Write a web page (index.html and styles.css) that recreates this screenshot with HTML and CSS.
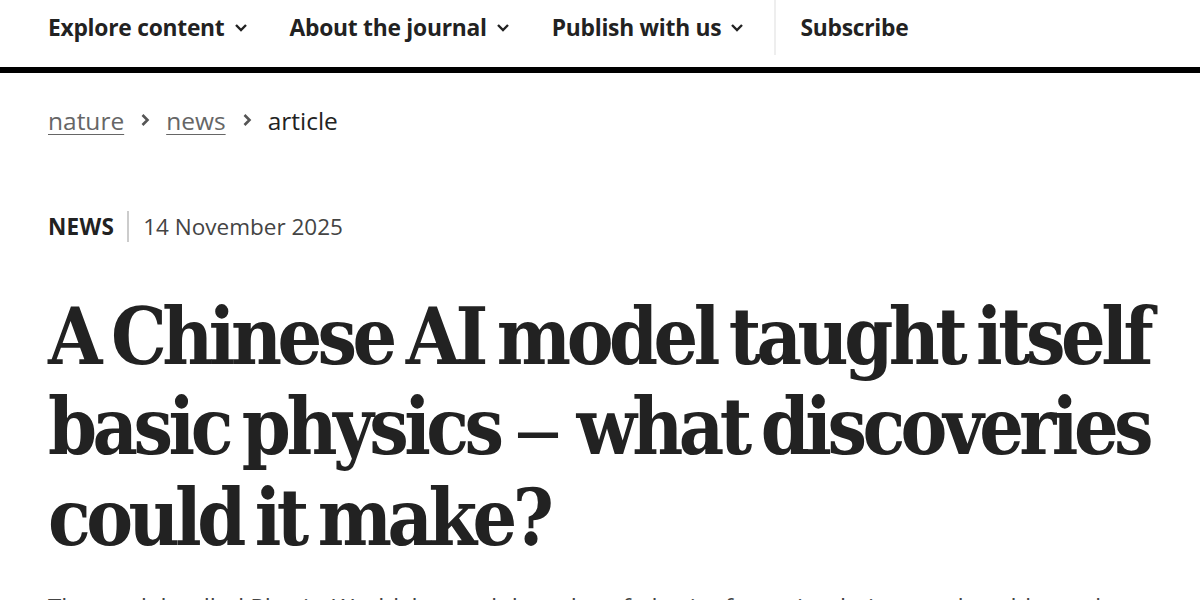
FILE: index.html
```html
<!DOCTYPE html>
<html lang="en">
<head>
<meta charset="utf-8">
<title>A Chinese AI model taught itself basic physics</title>
<link rel="stylesheet" href="styles.css">
</head>
<body>
<header class="site-header">
  <nav class="nav">
    <ul class="nav-list">
      <li class="nav-item"><span>Explore content</span><svg class="chev" viewBox="0 0 14 10" width="14" height="10"><path d="M2 2 L7 7 L12 2" fill="none" stroke="currentColor" stroke-width="2.4"/></svg></li>
      <li class="nav-item"><span>About the journal</span><svg class="chev" viewBox="0 0 14 10" width="14" height="10"><path d="M2 2 L7 7 L12 2" fill="none" stroke="currentColor" stroke-width="2.4"/></svg></li>
      <li class="nav-item"><span>Publish with us</span><svg class="chev" viewBox="0 0 14 10" width="14" height="10"><path d="M2 2 L7 7 L12 2" fill="none" stroke="currentColor" stroke-width="2.4"/></svg></li>
      <li class="nav-item nav-sub"><span>Subscribe</span></li>
    </ul>
  </nav>
</header>
<main class="main">
  <ol class="crumbs">
    <li><a href="#">nature</a></li>
    <li class="sep"><svg viewBox="0 0 10 14" width="10" height="14"><path d="M2.5 2 L7.5 7 L2.5 12" fill="none" stroke="currentColor" stroke-width="2.6"/></svg></li>
    <li><a href="#">news</a></li>
    <li class="sep"><svg viewBox="0 0 10 14" width="10" height="14"><path d="M2.5 2 L7.5 7 L2.5 12" fill="none" stroke="currentColor" stroke-width="2.6"/></svg></li>
    <li class="current">article</li>
  </ol>
  <div class="meta">
    <span class="type">NEWS</span>
    <span class="date">14 November 2025</span>
  </div>
  <h1 class="title">A Chinese AI model taught itself basic physics <span class="dash">–</span> what discoveries could it make?</h1>
  <p class="standfirst">The model, called PhysicsWorld, learned the rules of physics from simulations and could one day help scientists find new laws.</p>
</main>
</body>
</html>
```
FILE: styles.css
```css
* { box-sizing: border-box; }
html, body { margin: 0; padding: 0; background: #fff; }
body { font-family: "Open Sans", "Liberation Sans", sans-serif; color: #222; overflow: hidden; height: 600px; }

.site-header { border-bottom: 6px solid #000; height: 73px; }
.nav { padding: 0 48px; }
.nav-list { list-style: none; margin: 0; padding: 0; display: flex; height: 55px; align-items: stretch; }
.nav-item { display: flex; align-items: center; gap: 9px; font-weight: 700; font-size: 22.8px; color: #222; margin-right: 42px; letter-spacing: -0.25px; }
.nav-item .chev { margin-top: 1px; }
.nav-sub { border-left: 2px solid #eee; padding-left: 24px; margin-left: -12px; }

.main { padding: 0 48px; }
.crumbs { list-style: none; margin: 0; padding: 0; display: flex; align-items: center; gap: 16px; height: 94px; font-size: 24.5px; }
.crumbs a { color: #666; text-decoration: underline; text-underline-offset: 4px; text-decoration-thickness: 1px; }
.crumbs .sep { color: #555; display: flex; }
.crumbs .current { color: #222; }

.meta { display: flex; align-items: center; margin-top: 44px; font-size: 22.5px; height: 30px; }
.type { font-weight: 700; padding-right: 13px; border-right: 2px solid #ccc; letter-spacing: 0.3px; }
.date { padding-left: 14px; color: #444; }

.title { font-family: "DejaVu Serif Condensed", "DejaVu Serif", serif; font-stretch: condensed; font-weight: 700; font-size: 78px; line-height: 90px; letter-spacing: -4.5px; word-spacing: -7px; margin: 51px -10px 0 0; color: #222; }
.title .dash { font-family: "Liberation Serif", serif; letter-spacing: 0; margin: 0 6px; }
.standfirst { font-size: 24px; color: #444; margin: 27px 0 0; }
```
